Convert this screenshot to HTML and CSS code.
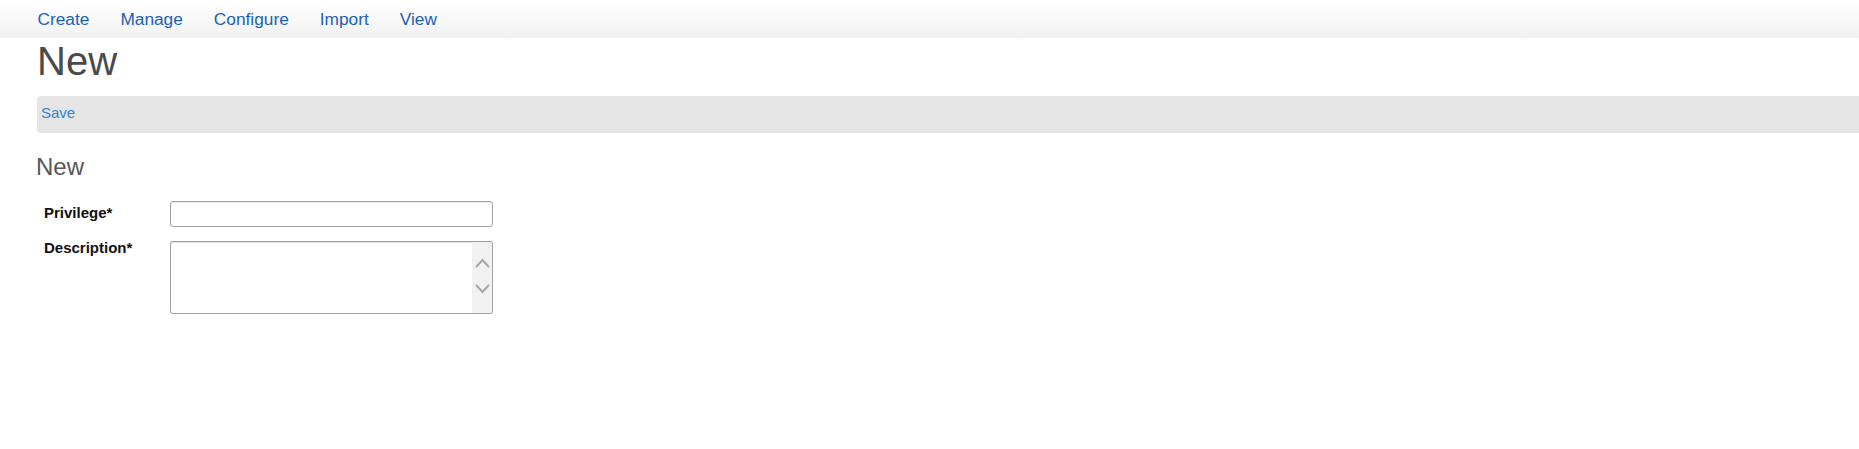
FILE: index.html
```html
<!DOCTYPE html>
<html lang="en">
<head>
<meta charset="utf-8">
<title>New</title>
<link rel="stylesheet" href="styles.css">
</head>
<body>
<nav class="topnav">
  <a class="nav-link" href="#">Create</a>
  <a class="nav-link" href="#">Manage</a>
  <a class="nav-link" href="#">Configure</a>
  <a class="nav-link" href="#">Import</a>
  <a class="nav-link" href="#">View</a>
</nav>
<h1 class="page-title">New</h1>
<div class="toolbar"><a class="toolbar-link" href="#">Save</a></div>
<h2 class="section-title">New</h2>
<form class="form">
  <div class="form-row">
    <label class="form-label form-label-input" for="privilege">Privilege*</label>
    <input class="text-input" id="privilege" type="text">
  </div>
  <div class="form-row">
    <label class="form-label" for="description">Description*</label>
    <div class="textbox">
      <textarea class="textbox-area" id="description"></textarea>
      <div class="scrollbar">
        <svg class="chev" width="15" height="10" viewBox="0 0 15 10"><path d="M1 9 L7.5 2 L14 9" fill="none" stroke="#a6a6a6" stroke-width="2"/></svg>
        <svg class="chev" width="15" height="10" viewBox="0 0 15 10"><path d="M1 1 L7.5 8 L14 1" fill="none" stroke="#a6a6a6" stroke-width="2"/></svg>
      </div>
    </div>
  </div>
</form>
</body>
</html>
```
FILE: styles.css
```css
html, body {
  margin: 0;
  padding: 0;
  background: #fff;
  font-family: "Liberation Sans", Arial, sans-serif;
}

.topnav {
  display: flex;
  height: 38px;
  padding-left: 22px;
  background: linear-gradient(to bottom, #ffffff 0%, #f2f2f2 100%);
}

.nav-link {
  display: block;
  padding: 0 15.5px;
  line-height: 38px;
  font-size: 17.3px;
  color: #1a62b6;
  text-decoration: none;
}

.page-title {
  margin: 1px 0 0 37px;
  font-size: 40px;
  line-height: 44px;
  font-weight: normal;
  color: #4a4a4a;
}

.toolbar {
  margin: 13px 0 0 37px;
  height: 37px;
  background: #e5e5e5;
  border-radius: 4px 0 0 4px;
  padding-left: 4px;
}

.toolbar-link {
  display: inline-block;
  line-height: 34px;
  font-size: 15px;
  color: #2f86d2;
  text-decoration: none;
}

.section-title {
  margin: 20px 0 0 36px;
  font-size: 24px;
  line-height: 28px;
  font-weight: normal;
  color: #575757;
}

.form {
  margin: 20px 0 0 44px;
  display: flex;
  flex-direction: column;
  gap: 12px;
}

.form-row {
  display: flex;
  align-items: flex-start;
}

.form-label {
  width: 126px;
  font-size: 15px;
  line-height: 18px;
  font-weight: bold;
  color: #111;
}

.form-label-input {
  padding-top: 3px;
}

.text-input {
  box-sizing: border-box;
  width: 323px;
  height: 26px;
  margin: 0;
  border: 1px solid #a2a2a2;
  border-radius: 3px;
  box-shadow: inset 0 1px 1px rgba(0, 0, 0, 0.08);
  font: 15px "Liberation Sans", Arial, sans-serif;
  padding: 2px 5px;
  background: #fff;
}

.textbox {
  box-sizing: border-box;
  display: flex;
  width: 323px;
  height: 73px;
  margin-top: 2px;
  border: 1px solid #a2a2a2;
  border-top-color: #9a9a9a;
  border-radius: 3px;
  box-shadow: inset 0 1px 1px rgba(0, 0, 0, 0.1);
  overflow: hidden;
  background: #fff;
}

.textbox-area {
  flex: 1;
  border: 0;
  margin: 0;
  padding: 3px 5px;
  resize: none;
  outline: none;
  background: transparent;
  font: 15px "Liberation Sans", Arial, sans-serif;
}

.scrollbar {
  width: 20px;
  background: #f1f1f1;
  display: flex;
  flex-direction: column;
  align-items: center;
  padding-top: 16px;
  gap: 16px;
}

.chev {
  display: block;
}
```
